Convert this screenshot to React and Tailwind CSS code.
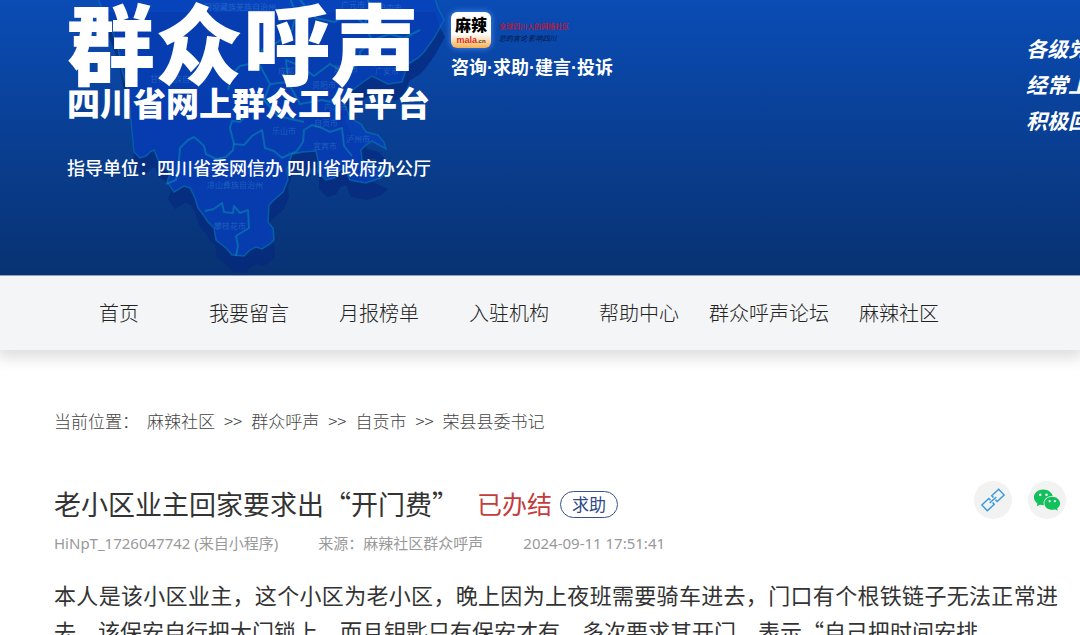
import React from "react";
import { AiFillWechat } from "react-icons/ai";

const navItems = ["首页", "我要留言", "月报榜单", "入驻机构", "帮助中心", "群众呼声论坛", "麻辣社区"];

const crumbs = ["麻辣社区", "群众呼声", "自贡市", "荣县县委书记"];

const slogans = ["各级党", "经常上", "积极回"];

const cities = [
  { name: "阿坝藏族羌族自治州", x: 204, y: 10 },
  { name: "广元市", x: 341, y: 8 },
  { name: "巴中市", x: 378, y: 11 },
  { name: "甘孜藏族自治州", x: 150, y: 82 },
  { name: "成都市", x: 278, y: 74 },
  { name: "遂宁市", x: 334, y: 72 },
  { name: "广安市", x: 375, y: 74 },
  { name: "资阳市", x: 312, y: 88 },
  { name: "内江市", x: 324, y: 110 },
  { name: "自贡市", x: 314, y: 126 },
  { name: "乐山市", x: 272, y: 134 },
  { name: "泸州市", x: 346, y: 142 },
  { name: "宜宾市", x: 313, y: 149 },
  { name: "凉山彝族自治州", x: 207, y: 188 },
  { name: "攀枝花市", x: 214, y: 229 },
];

const outline =
  "M96 -5 L104 12 L112 30 L118 48 L122 70 L128 90 L130 112 L132 132 L134 152 L140 158 L146 156 L150 152 L154 150 L158 160 L164 164 L170 174 L167 182 L174 192 L184 186 L190 188 L195 198 L198 208 L204 216 L208 222 L214 228 L216 240 L226 248 L232 255 L244 256 L250 250 L256 247 L262 249 L270 244 L274 240 L273 228 L268 222 L269 205 L274 200 L283 192 L288 180 L287 170 L292 154 L303 152 L316 151 L318 160 L318 172 L326 180 L334 178 L340 170 L345 168 L350 180 L366 183 L380 178 L387 172 L378 168 L362 160 L361 150 L366 145 L372 141 L386 149 L384 142 L378 135 L366 132 L361 124 L350 118 L343 100 L355 88 L366 80 L372 76 L388 84 L402 82 L408 64 L418 58 L424 52 L434 38 L444 20 L438 8 L434 -5 Z";

const SichuanMap = () => (
  <svg className="absolute left-0 top-0" width="460" height="275" viewBox="0 0 460 275" aria-hidden="true">
    <path d={outline} transform="translate(1 17)" fill="#062a7e" opacity="0.75" />
    <path d={outline} fill="#0742bd" fillOpacity="0.75" stroke="#087fb5" strokeOpacity="0.55" strokeWidth="1.5" />
    <g fill="none" stroke="#0892b8" strokeOpacity="0.5" strokeWidth="2" strokeLinejoin="round">
      <path d="M166 184 L176 180 L177 172 L179 160 L180 148 L188 140 L194 137 L200 142 L204 146 L206 154 L216 159 L226 157 L233 150 L234 144 L230 128 L232 121 L240 122 L248 114" />
      <path d="M234 144 L244 145 L252 136 L262 130 L265 148 L274 151 L282 158 L290 154 L296 152 L303 142 L304 130 L312 125 L322 128 L330 132 L342 128 L344 146 L352 156" />
      <path d="M205 211 L214 209 L222 203 L224 212 L233 213 L234 206 L240 213 L248 210 L249 228 L236 236 L238 246 L236 256" />
      <path d="M228 90 L232 74 L240 66 L258 62 L270 84 L288 82 L286 60 L300 66 L314 76 L330 64 L346 74 L360 62" />
      <path d="M290 -2 L296 14 L292 30 L278 42 L262 50 L258 62 M300 0 L316 18 L334 22 L352 14 L364 24 L372 12 L368 0" />
      <path d="M364 24 L372 40 L390 34 L404 38 L420 30 M372 40 L360 52 L360 62 L376 66 M270 84 L264 100 L278 116 L304 122 M288 82 L300 104 L322 100 L340 104" />
    </g>
    <g fill="#64b7e8" fillOpacity="0.3" fontSize="8" fontFamily="Noto Sans CJK SC, sans-serif">
      {cities.map((c) => (
        <text key={c.name} x={c.x} y={c.y}>
          {c.name}
        </text>
      ))}
    </g>
  </svg>
);

const MalaLogo = () => (
  <div className="flex items-center gap-2">
    <div className="flex h-9 w-10 flex-col items-center rounded-md bg-linear-to-b from-white from-60% to-[#f6b04c] shadow-[0_0_6px_#4d8ff0]">
      <span className="text-[16px] leading-6 font-black text-black">麻辣</span>
      <span className="font-['Liberation_Sans'] text-[9px] leading-2 font-bold text-[#d9301c]">
        mala<span className="text-[6px] text-[#5a3a10]">.cn</span>
      </span>
    </div>
    <div className="pt-1 text-[7px] leading-3">
      <p className="font-bold text-[#a3204a]">全球四川人的网络社区</p>
      <p className="text-[#04163f] italic">您的言论 影响四川</p>
    </div>
  </div>
);

const Banner = () => (
  <header className="relative h-[276px] overflow-hidden border-b border-[#8f9fc4] bg-linear-to-b from-[#0a4cb5] to-[#083272] text-white">
    <SichuanMap />
    <div className="relative flex items-start gap-4 pl-[67px]">
      <div className="w-[368px] shrink-0 whitespace-nowrap">
        <h1 className="text-[88px] leading-[80px] font-black">群众呼声</h1>
        <p className="pt-[6px] text-[33px] leading-8 font-black">四川省网上群众工作平台</p>
        <p className="pt-[37px] text-[18px] leading-6 font-medium">指导单位：四川省委网信办 四川省政府办公厅</p>
      </div>
      <div className="shrink-0 pt-3">
        <MalaLogo />
        <p className="pt-2 font-['Liberation_Sans','Noto_Sans_CJK_SC',sans-serif] text-[18px] leading-6 font-bold">
          咨询·求助·建言·投诉
        </p>
      </div>
      <div className="ml-auto w-[54px] overflow-hidden pt-[30px] text-[21px] leading-9 font-bold whitespace-nowrap italic">
        {slogans.map((s) => (
          <p key={s}>{s}</p>
        ))}
      </div>
    </div>
  </header>
);

const LinkIcon = () => (
  <svg width="24" height="24" viewBox="0 0 24 24" fill="none" stroke="#3a9bdc" strokeWidth="1.5" aria-hidden="true">
    <g transform="rotate(-43 12 12)">
      <path d="M10 10.500V8H0.500V16H10V13.500" />
      <path d="M14 10.500V8H23.500V16H14V13.500" />
      <path d="M7.500 12H16.500" />
    </g>
  </svg>
);

const Article = () => (
  <article className="pt-[46px] pr-[22px] pl-[54px]">
    <div className="flex items-start justify-between">
      <div>
        <div className="flex items-center">
          <h2 className="text-[27px] leading-[46px] text-[#333333]">老小区业主回家要求出“开门费”</h2>
          <span className="ml-[18px] text-[25px] text-[#c43c3c]">已办结</span>
          <span className="ml-2 flex h-[27px] items-center rounded-full border border-[#35528f] px-[11px] text-[17px] text-[#2f4a86]">
            求助
          </span>
        </div>
        <div className="flex gap-10 pt-1 font-['Noto_Sans','Noto_Sans_CJK_SC',sans-serif] text-[15px] leading-6 text-[#999999]">
          <span>HiNpT_1726047742 (来自小程序)</span>
          <span>来源：麻辣社区群众呼声</span>
          <time>2024-09-11 17:51:41</time>
        </div>
      </div>
      <div className="-mr-2 flex gap-4">
        <button aria-label="复制链接" className="flex size-[38px] items-center justify-center rounded-full bg-[#f2f2f2]">
          <LinkIcon />
        </button>
        <button aria-label="微信分享" className="flex size-[38px] items-center justify-center rounded-full bg-[#f2f2f2]">
          <AiFillWechat className="size-[30px] text-[#12c05c]" />
        </button>
      </div>
    </div>
    <p className="pt-[21px] text-justify text-[22px] leading-9 text-[#333333]">
      本人是该小区业主，这个小区为老小区，晚上因为上夜班需要骑车进去，门口有个根铁链子无法正常进去，该保安自行把大门锁上，而且钥匙只有保安才有，多次要求其开门，表示“自己把时间安排
    </p>
  </article>
);

const App = () => {
  return (
    <div lang="zh-CN" className="h-screen overflow-hidden bg-white font-['Noto_Sans_CJK_SC',sans-serif]">
      <Banner />
      <nav className="flex h-[74px] items-center bg-[#f4f5f7] pl-[54px] shadow-[0_4px_14px_4px_rgba(0,0,0,0.13)]">
        {navItems.map((item) => (
          <a key={item} href="#" className="w-[130px] text-center text-[20px] font-light whitespace-nowrap text-[#222222]">
            {item}
          </a>
        ))}
      </nav>
      <div className="flex gap-2 pt-[57px] pl-[54px] text-[17px] leading-7 font-light text-[#444444]">
        <span>当前位置：</span>
        {crumbs.map((c, i) => (
          <React.Fragment key={c}>
            {i > 0 && <span className="px-px">&gt;&gt;</span>}
            <a href="#">{c}</a>
          </React.Fragment>
        ))}
      </div>
      <Article />
    </div>
  );
};

export default App;
